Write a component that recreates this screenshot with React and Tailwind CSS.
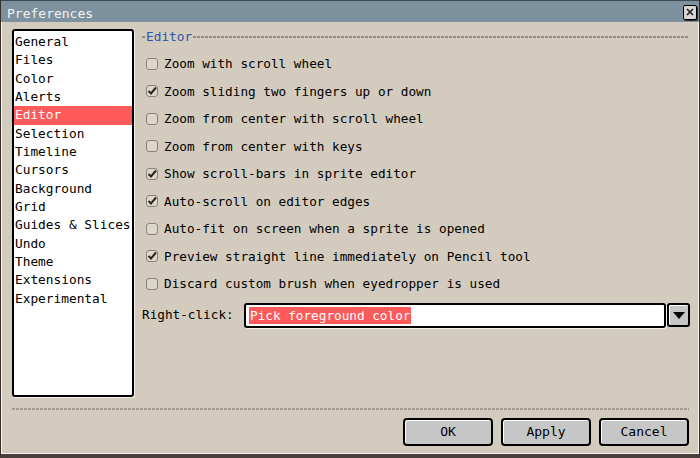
import React from 'react';

const font = { fontFamily: '"DejaVu Sans Mono", "Liberation Mono", monospace' };

const sections = [
  'General', 'Files', 'Color', 'Alerts', 'Editor', 'Selection', 'Timeline', 'Cursors',
  'Background', 'Grid', 'Guides & Slices', 'Undo', 'Theme', 'Extensions', 'Experimental',
];

const options = [
  ['Zoom with scroll wheel', false],
  ['Zoom sliding two fingers up or down', true],
  ['Zoom from center with scroll wheel', false],
  ['Zoom from center with keys', false],
  ['Show scroll-bars in sprite editor', true],
  ['Auto-scroll on editor edges', true],
  ['Auto-fit on screen when a sprite is opened', false],
  ['Preview straight line immediately on Pencil tool', true],
  ['Discard custom brush when eyedropper is used', false],
];

function CheckBox({ checked }) {
  return (
    <svg width="12" height="12" viewBox="0 0 12 12" className="shrink-0">
      <rect x="0.5" y="0.5" width="11" height="11" rx="2.5" fill="#ddd6cb" stroke="#8c8178" />
      {checked && (
        <path d="M2.5 6 L5 8.5 L10 2.5" fill="none" stroke="#2a2522" strokeWidth="2" />
      )}
    </svg>
  );
}

function Button({ children }) {
  return (
    <button className="w-[90px] h-[28px] bg-[#c6c6c6] border-2 border-black rounded-[4px] shadow-[inset_1px_1px_0_#ffffff] text-[13px] text-black">
      {children}
    </button>
  );
}

export default function App() {
  return (
    <div
      style={font}
      className="w-[700px] h-[458px] flex flex-col bg-[#d3cbbe] border-l border-r border-[#3a302b] border-b-4 border-b-[#4a3f3a] overflow-hidden"
    >
      {/* title bar */}
      <div className="h-[22px] shrink-0 bg-[#7d929e] border-t border-[#3a4a52] flex items-center justify-between pl-[6px] pr-[2px]">
        <span className="text-[13px] text-[#f2f2f2] leading-none pt-[4px]">Preferences</span>
        <div className="w-[14px] h-[15px] mt-[1px] bg-[#d6d6d6] border border-black rounded-[2px] shadow-[1px_1px_0_#2a2a2a] flex items-center justify-center">
          <svg width="8" height="8" viewBox="0 0 8 8">
            <path d="M1 1 L7 7 M7 1 L1 7" stroke="#222" strokeWidth="1.6" />
          </svg>
        </div>
      </div>

      {/* body */}
      <div className="flex-1 flex flex-col border-l border-r border-b border-[#f4f0ea] pl-[10px] pr-[8px]">
        <div className="flex gap-[8px] pt-[7px]">
          {/* section list */}
          <div className="w-[122px] h-[368px] shrink-0 bg-white border-2 border-black rounded-[3px] shadow-[1px_1px_0_#f4f0ea] pt-[2px] text-[12.8px] text-black">
            {sections.map((s) => (
              <div
                key={s}
                className={
                  'h-[18.35px] leading-[18.35px] pl-[1px] whitespace-nowrap ' +
                  (s === 'Editor' ? 'bg-[#fe5a5a] text-white' : '')
                }
              >
                {s}
              </div>
            ))}
          </div>

          {/* editor panel */}
          <div className="flex-1 min-w-0 flex flex-col">
            <div className="h-[16px] flex items-center">
              <div className="w-[3px] h-[2px] bg-[#958a80] mr-[1px]" />
              <span className="text-[12.8px] text-[#2f55a8] leading-none">Editor</span>
              <div className="flex-1 h-[2px] ml-[1px] mr-[1px] bg-[repeating-linear-gradient(90deg,#958a80_0_3px,transparent_3px_4px)]" />
            </div>
            <div className="flex flex-col pl-[4px] pt-[5px]">
              {options.map(([label, checked]) => (
                <div key={label} className="h-[27.5px] flex items-center gap-[6px]">
                  <CheckBox checked={checked} />
                  <span className="text-[12.7px] text-black whitespace-nowrap">{label}</span>
                </div>
              ))}
            </div>
            <div className="flex items-center mt-[5px] h-[25px]">
              <span className="text-[12.7px] text-black w-[102px] shrink-0">Right-click:</span>
              <div className="flex-1 h-[25px] bg-white border-2 border-black rounded-[3px] shadow-[inset_0_0_0_1px_#ffffff,1px_1px_0_#f4f0ea] flex items-center px-[3px]">
                <span className="bg-[#fe5a5a] text-white text-[12.7px] leading-[17px] px-[1px]">
                  Pick foreground color
                </span>
              </div>
              <div className="w-[23px] h-[24px] ml-[1px] bg-[#c6c6c6] border-2 border-black rounded-[3px] shadow-[inset_1px_1px_0_#ffffff] flex items-center justify-center">
                <svg width="12" height="7" viewBox="0 0 12 7">
                  <path d="M0 0 H12 L6 7 Z" fill="#000" />
                </svg>
              </div>
            </div>
          </div>
        </div>

        {/* separator */}
        <div className="mt-[11px] mr-[1px] h-[2px] bg-[repeating-linear-gradient(90deg,#a69b90_0_3px,transparent_3px_4px)]" />

        {/* buttons */}
        <div className="flex justify-end gap-[8px] pt-[8px] pr-[1px]">
          <Button>OK</Button>
          <Button>Apply</Button>
          <Button>Cancel</Button>
        </div>
      </div>
    </div>
  );
}
